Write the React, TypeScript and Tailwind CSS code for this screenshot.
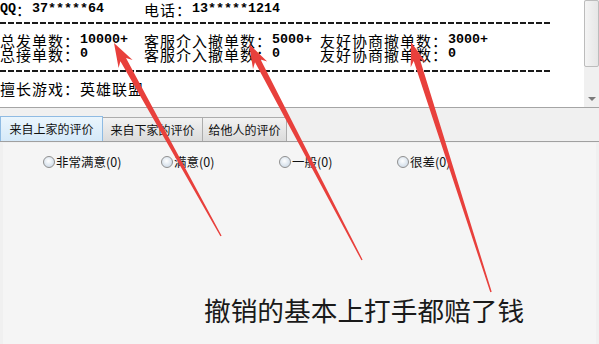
import React from 'react';

const cjk = "font-['Noto_Sans_CJK_SC','Noto_Sans',sans-serif]";
const mono = "font-['Liberation_Mono',monospace] font-bold text-[13.33px]";

type Seg = { t: string; m?: boolean };

const Line = ({ segs, h }: { segs: Seg[]; h: string }) => (
  <div className={`flex items-center ${h} leading-none text-black`}>
    {segs.map((s, i) => (
      <span
        key={i}
        className={`whitespace-pre ${s.m ? mono : `${cjk} text-[15px] tracking-[1px]`}`}
      >
        {s.t}
      </span>
    ))}
  </div>
);

const Dashes = ({ mt }: { mt: string }) => (
  <div
    className={`${mt} h-[2px] w-[552px] bg-[repeating-linear-gradient(90deg,#1a1a1a_0_6px,transparent_6px_8px)]`}
  />
);

const Radio = ({ label }: { label: string }) => (
  <div className="flex w-[118px] items-center gap-[1px]">
    <span className="h-[12px] w-[12px] rounded-full border border-[#8f8f8f] bg-[radial-gradient(circle_at_45%_40%,#ffffff_0,#dde6ef_55%,#c7d3df_100%)]" />
    <span className={`${cjk} text-[12.5px] leading-none text-[#111]`}>{label}</span>
  </div>
);

// red annotation arrow from tail (thin end) to tip
const arrowPoints = (tx: number, ty: number, px: number, py: number) => {
  const dx = px - tx;
  const dy = py - ty;
  const len = Math.hypot(dx, dy);
  const ux = dx / len;
  const uy = dy / len;
  const nx = -uy;
  const ny = ux;
  const L = 24;
  const W = 8;
  const w1 = 3.2;
  const w0 = 0.7;
  const bx = px - ux * L;
  const by = py - uy * L;
  const nbx = px - ux * (L - 5);
  const nby = py - uy * (L - 5);
  const pts = [
    [tx + nx * w0, ty + ny * w0],
    [nbx + nx * w1, nby + ny * w1],
    [bx + nx * W, by + ny * W],
    [px, py],
    [bx - nx * W, by - ny * W],
    [nbx - nx * w1, nby - ny * w1],
    [tx - nx * w0, ty - ny * w0],
  ];
  return pts.map((p) => `${p[0].toFixed(1)},${p[1].toFixed(1)}`).join(' ');
};

const arrows = [
  [221, 236, 114, 43],
  [362, 260, 249, 44],
  [491, 292, 411, 42],
];

export default function App() {
  return (
    <div className="relative h-[344px] w-[599px] overflow-hidden bg-[#f0f0f0]">
      {/* info text box */}
      <div className="flex h-[108px] border-b border-[#a5a5a5] bg-white">
        <div className="flex-1 pt-[1px]">
          <Line
            h="h-[16px]"
            segs={[
              { t: 'QQ', m: true },
              { t: '：' },
              { t: '37*****64     ', m: true },
              { t: '电话：' },
              { t: '13*****1214', m: true },
            ]}
          />
          <Dashes mt="mt-[5px]" />
          <div className="mt-[9px]">
            <Line
              h="h-[14px]"
              segs={[
                { t: '总发单数：' },
                { t: '10000+  ', m: true },
                { t: '客服介入撤单数：' },
                { t: '5000+ ', m: true },
                { t: '友好协商撤单数：' },
                { t: '3000+', m: true },
              ]}
            />
            <Line
              h="h-[14px]"
              segs={[
                { t: '总接单数：' },
                { t: '0       ', m: true },
                { t: '客服介入撤单数：' },
                { t: '0     ', m: true },
                { t: '友好协商撤单数：' },
                { t: '0', m: true },
              ]}
            />
          </div>
          <Dashes mt="mt-[9px]" />
          <div className="mt-[8px]">
            <Line h="h-[16px]" segs={[{ t: '擅长游戏：英雄联盟' }]} />
          </div>
        </div>
        {/* scrollbar */}
        <div className="flex w-[15px] flex-col bg-[#f0f0f0]">
          <div className="h-[67px] rounded-[2px] border border-[#bcbcbc] bg-[linear-gradient(90deg,#f4f4f4,#e6e6e6)]" />
          <div className="flex flex-1 items-end justify-center pb-[6px]">
            <div className="h-0 w-0 border-x-[4px] border-t-[4px] border-x-transparent border-t-[#7a7a7a]" />
          </div>
        </div>
      </div>

      {/* tabs */}
      <div className="mt-[9px] flex h-[25px] items-end border-b border-[#a0a0a0]">
        <div className={`flex h-[25px] w-[103px] items-center justify-center border border-b-0 border-[#8fbbe3] bg-[linear-gradient(#eaf5fd,#d5e9f9)] ${cjk} text-[12px] text-[#111]`}>
          来自上家的评价
        </div>
        <div className={`flex h-[24px] w-[100px] items-center justify-center border border-b-0 border-l-0 border-[#acacac] bg-[linear-gradient(#f2f2f2,#dbdbdb)] ${cjk} text-[12px] text-[#111]`}>
          来自下家的评价
        </div>
        <div className={`flex h-[24px] w-[84px] items-center justify-center border border-b-0 border-l-0 border-[#acacac] bg-[linear-gradient(#f2f2f2,#dbdbdb)] ${cjk} text-[12px] text-[#111]`}>
          给他人的评价
        </div>
      </div>

      {/* tab panel */}
      <div className="mx-[3px] mt-px h-[201px] bg-[#f5f5f5] pt-[11px]">
        <div className="flex h-[16px] items-center pl-[40px]">
          <Radio label="非常满意(0)" />
          <Radio label="满意(0)" />
          <Radio label="一般(0)" />
          <Radio label="很差(0)" />
        </div>
        <div className={`mt-[124px] pl-[201px] ${cjk} text-[26.7px] leading-[32px] text-[#1a1a1a]`}>
          撤销的基本上打手都赔了钱
        </div>
      </div>

      {/* annotation arrows */}
      <svg className="pointer-events-none absolute inset-0" width="599" height="344">
        {arrows.map((a, i) => (
          <polygon key={i} points={arrowPoints(a[0], a[1], a[2], a[3])} fill="#e8403c" />
        ))}
      </svg>
    </div>
  );
}
